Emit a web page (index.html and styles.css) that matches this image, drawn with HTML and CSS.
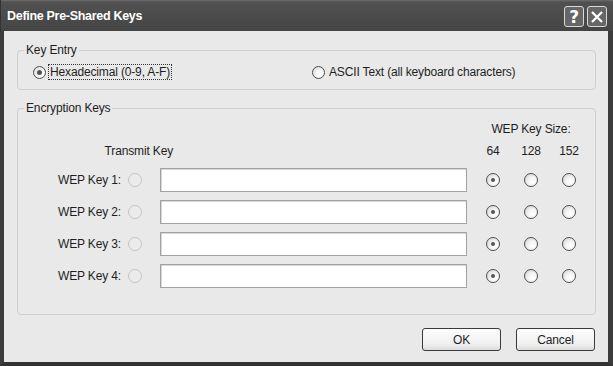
FILE: index.html
```html
<!DOCTYPE html>
<html lang="en">
<head>
    <meta charset="UTF-8">
    <title>Define Pre-Shared Keys</title>
    <link rel="stylesheet" href="styles.css">
</head>
<body>
    <div class="window">
        <div class="titlebar">
            <span class="title">Define Pre-Shared Keys</span>
            <div class="tb-buttons">
                <span class="tb-btn help">?</span>
                <span class="tb-btn close">
                    <svg width="14" height="14" viewBox="0 0 14 14">
                        <path d="M2 2 L12 12 M12 2 L2 12" stroke="#fff" stroke-width="2.2" fill="none"/>
                    </svg>
                </span>
            </div>
        </div>
        <div class="client">
            <fieldset class="group key-entry">
                <legend>Key Entry</legend>
                <div class="entry-row">
                    <label class="opt hex"><span class="radio on"></span><span class="focus">Hexadecimal (0-9, A-F)</span></label>
                    <label class="opt"><span class="radio"></span><span>ASCII Text (all keyboard characters)</span></label>
                </div>
            </fieldset>

            <fieldset class="group enc">
                <legend>Encryption Keys</legend>
                <div class="key-grid">
                    <span class="spacer-head"></span>
                    <span class="size-head">WEP Key Size:</span>

                    <span class="tx-head">Transmit Key</span>
                    <span></span>
                    <span class="bits">64</span>
                    <span class="bits">128</span>
                    <span class="bits">152</span>

                    <span class="key-label">WEP Key 1:</span>
                    <span class="radio off tx"></span>
                    <input class="key-input" type="text">
                    <span class="radio on sz"></span><span class="radio sz"></span><span class="radio sz"></span>

                    <span class="key-label">WEP Key 2:</span>
                    <span class="radio off tx"></span>
                    <input class="key-input" type="text">
                    <span class="radio on sz"></span><span class="radio sz"></span><span class="radio sz"></span>

                    <span class="key-label">WEP Key 3:</span>
                    <span class="radio off tx"></span>
                    <input class="key-input" type="text">
                    <span class="radio on sz"></span><span class="radio sz"></span><span class="radio sz"></span>

                    <span class="key-label">WEP Key 4:</span>
                    <span class="radio off tx"></span>
                    <input class="key-input" type="text">
                    <span class="radio on sz"></span><span class="radio sz"></span><span class="radio sz"></span>
                </div>
            </fieldset>

            <div class="actions">
                <button class="btn">OK</button>
                <button class="btn">Cancel</button>
            </div>
        </div>
    </div>
</body>
</html>
```

FILE: styles.css
```css
html, body {
    margin: 0;
    padding: 0;
    background: #e9e9e9;
}
.window {
    width: 613px;
    height: 366px;
    display: flex;
    flex-direction: column;
    font-family: "Liberation Sans", Arial, sans-serif;
    font-size: 12px;
    letter-spacing: -0.15px;
    color: #1e1e1e;
}
.titlebar {
    height: 31px;
    flex: none;
    display: flex;
    align-items: center;
    justify-content: space-between;
    padding: 0 6px 0 6px;
    box-sizing: border-box;
    background: linear-gradient(#6e6e6e 0, #515151 2px, #4a4a4a 60%, #444 100%);
    border-left: 1px solid #333;
}
.title {
    color: #fff;
    font-weight: bold;
    font-size: 12.5px;
    letter-spacing: -0.3px;
    margin-top: 1px;
}
.tb-buttons {
    display: flex;
    gap: 3px;
    margin-top: 2px;
}
.tb-btn {
    width: 18px;
    height: 19px;
    border: 1px solid #d8d8d8;
    border-radius: 3px;
    background: #666;
    display: flex;
    align-items: center;
    justify-content: center;
    color: #fff;
    font-weight: bold;
    font-size: 17px;
    font-family: "DejaVu Sans", sans-serif;
}
.client {
    flex: 1;
    background: #e9e9e9;
    border-left: 4px solid #3c3c3c;
    border-right: 5px solid #3c3c3c;
    border-bottom: 4px solid #333;
    display: flex;
    flex-direction: column;
}
.group {
    border: 1px solid #cfcfcf;
    border-radius: 4px;
    margin: 0 12px 0 13px;
    padding: 0;
}
.group legend {
    padding: 0 2px;
    margin-left: 6px;
    line-height: 14px;
}
.key-entry {
    margin-top: 12px;
    padding: 8px 0 10px 0;
}
.entry-row {
    display: flex;
    align-items: center;
    height: 14px;
    padding-left: 15px;
}
.opt {
    display: flex;
    align-items: center;
    gap: 4px;
}
.hex {
    width: 279px;
    flex: none;
}
.focus {
    outline: 1px dotted #333;
    outline-offset: 0;
    padding: 0 1px;
    margin-left: -1px;
}
.radio {
    width: 11px;
    height: 11px;
    border: 1px solid #4e4e4e;
    border-radius: 50%;
    background: radial-gradient(circle at 65% 65%, #fff 0, #f4f4f4 40%, #cfcfcf 100%);
    position: relative;
    flex: none;
}
.radio.on::after {
    content: "";
    position: absolute;
    left: 3px;
    top: 3px;
    width: 5px;
    height: 5px;
    border-radius: 50%;
    background: #555;
}
.radio.off {
    border-color: #c6c6c6;
    background: #ebebeb;
}
.key-grid .radio {
    width: 12px;
    height: 12px;
}
.key-grid .radio.on::after {
    left: 4px;
    top: 4px;
    width: 4px;
    height: 4px;
}
.enc {
    margin-top: 11px;
    padding: 7px 0 26px 0;
}
.key-grid {
    display: grid;
    grid-template-columns: 103px 39px 314px 38px 38px 38px;
    grid-template-rows: 14px 16px repeat(4, 24px);
    row-gap: 8px;
    align-items: center;
}
.spacer-head {
    grid-column: span 3;
}
.size-head {
    grid-column: span 3;
    text-align: center;
}
.tx-head {
    grid-column: span 2;
    align-self: start;
    justify-self: end;
    margin-right: -13px;
}
.bits {
    align-self: start;
    text-align: center;
}
.key-label {
    text-align: right;
}
.radio.tx {
    margin-left: 7px;
}
.radio.sz {
    justify-self: center;
}
.key-input {
    width: 307px;
    height: 24px;
    box-sizing: border-box;
    border: 1px solid #a2a2a2;
    box-shadow: inset 1px 1px 0 #d6d6d6;
    background: #fff;
    margin: -1px 0 0 0;
    padding: 0;
}
.actions {
    display: flex;
    justify-content: flex-end;
    gap: 15px;
    margin: 13px 13px 0 0;
}
.btn {
    width: 79px;
    height: 23px;
    border: 1px solid #3a3a3a;
    border-radius: 3px;
    background: linear-gradient(#fdfdfd, #f0f0f0 70%, #dedede);
    font-family: "Liberation Sans", Arial, sans-serif;
    font-size: 12px;
    letter-spacing: -0.15px;
    color: #1e1e1e;
    padding: 0;
}
```
